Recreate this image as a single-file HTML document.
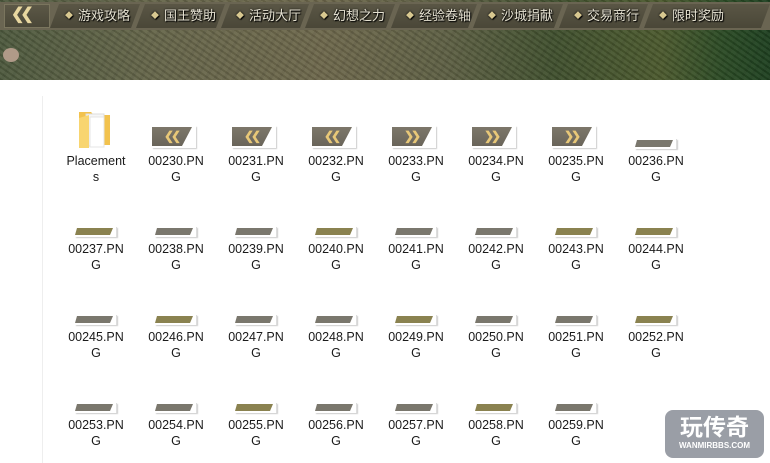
<!DOCTYPE html>
<html><head><meta charset="utf-8">
<style>
*{margin:0;padding:0;box-sizing:border-box}
body{width:770px;height:463px;overflow:hidden;background:#fff;position:relative;font-family:"Liberation Sans","Noto Sans CJK SC",sans-serif}
.banner{position:absolute;left:0;top:0;width:770px;height:80px;background:linear-gradient(90deg,#4e5a3e 0%,#66664a 20%,#6e684c 42%,#5e6044 58%,#40502e 72%,#4c5a2e 86%,#2a4a24 94%,#1e4020 100%)}
.banner:after{content:"";position:absolute;left:0;top:0;right:0;bottom:0;background:repeating-linear-gradient(35deg,rgba(0,0,0,.08) 0 2px,rgba(255,255,255,.05) 2px 5px),repeating-linear-gradient(-60deg,rgba(0,0,0,.06) 0 3px,transparent 3px 8px)}
.mush{position:absolute;left:3px;top:48px;width:16px;height:14px;border-radius:50%;background:#b09a88;z-index:1}
.bar{position:absolute;left:0;top:2px;width:770px;height:28px;background:#6a6552;z-index:2}
.tab{position:absolute;top:2px;height:24px;background:linear-gradient(#5a5645,#4a4738);clip-path:polygon(9px 0,100% 0,calc(100% - 9px) 100%,0 100%);color:#e6e2d2;font-size:13px;line-height:24px;text-shadow:0 0 2px #000,1px 1px 1px #000;white-space:nowrap;padding-left:15px}
.tab i{font-style:normal;font-size:8px;color:#d8c890;margin-right:5px;position:relative;top:-2px}
.back{position:absolute;left:4px;top:2px;width:46px;height:24px;background:linear-gradient(#5c5847,#4a4738);border:1px solid #7a755e;color:#e8d7a0;font-size:16px;font-weight:bold;line-height:20px;padding-left:6px;letter-spacing:-4px}
.vline{position:absolute;left:42px;top:96px;width:1px;height:367px;background:#eeeeee}
.lbl{position:absolute;width:76px;text-align:center;font-size:12.5px;line-height:16px;color:#1a1a1a}
.big{position:absolute;width:44px;height:22px;background:#fff;box-shadow:1px 1px 1px #ccc}
.big div{position:absolute;left:0;top:1px;width:40px;height:19px;background:linear-gradient(#7d776a,#6a655a);clip-path:polygon(0 0,100% 0,75% 100%,0 100%);color:#e8c878;font-size:12px;font-weight:bold;line-height:19px;padding-left:12px;letter-spacing:-3px}
.sm{position:absolute;width:42px;height:10px;background:#fff;box-shadow:1px 1px 1px #ccc;border-right:1px solid #ddd}
.sm div{position:absolute;left:0;top:1px;width:38px;height:7px;clip-path:polygon(2px 0,100% 0,calc(100% - 3px) 100%,0 100%)}
.g{background:#7a776d}.o{background:#8a8250}
.folder{position:absolute;left:78px;top:108px;width:34px;height:40px}
.wm{position:absolute;left:665px;top:410px;width:99px;height:48px;border-radius:8px;background:#9a9ea6;color:#fff;text-align:center}
.wm b{display:block;font-size:23px;line-height:28px;padding-top:3px}
.wm span{display:block;font-size:8px;line-height:10px;font-weight:bold}
</style></head><body>
<div class="banner"><div class="mush"></div></div>
<div class="bar">
<div class="back">❮❮</div>
<div class="tab" style="left:50px;width:90px"><i>◆</i>游戏攻略</div>
<div class="tab" style="left:136px;width:89px"><i>◆</i>国王赞助</div>
<div class="tab" style="left:221px;width:88px"><i>◆</i>活动大厅</div>
<div class="tab" style="left:305px;width:90px"><i>◆</i>幻想之力</div>
<div class="tab" style="left:391px;width:86px"><i>◆</i>经验卷轴</div>
<div class="tab" style="left:473px;width:90px"><i>◆</i>沙城捐献</div>
<div class="tab" style="left:559px;width:89px"><i>◆</i>交易商行</div>
<div class="tab" style="left:644px;width:126px"><i>◆</i>限时奖励</div>
</div>
<div class="vline"></div>

<svg class="folder" viewBox="0 0 34 40"><path d="M1 4h12l3 3h16v30H1z" fill="#f2c24e"/><path d="M8 6h18v32H8z" fill="#f6f6f6" stroke="#ddd"/><path d="M12 9h14v30H12z" fill="#fff" stroke="#e4e4e4"/><path d="M1 10l10-3v33H1z" fill="#f8d570"/></svg>
<div class="lbl" style="left:58px;top:153px">Placement<br>s</div>

<div class="big" style="left:152px;top:126px"><div>❮❮</div></div>
<div class="big" style="left:232px;top:126px"><div>❮❮</div></div>
<div class="big" style="left:312px;top:126px"><div>❮❮</div></div>
<div class="big" style="left:392px;top:126px"><div>❯❯</div></div>
<div class="big" style="left:472px;top:126px"><div>❯❯</div></div>
<div class="big" style="left:552px;top:126px"><div>❯❯</div></div>
<div class="sm" style="left:635px;top:139px"><div class="g"></div></div>
<div class="lbl" style="left:138px;top:153px">00230.PN<br>G</div>
<div class="lbl" style="left:218px;top:153px">00231.PN<br>G</div>
<div class="lbl" style="left:298px;top:153px">00232.PN<br>G</div>
<div class="lbl" style="left:378px;top:153px">00233.PN<br>G</div>
<div class="lbl" style="left:458px;top:153px">00234.PN<br>G</div>
<div class="lbl" style="left:538px;top:153px">00235.PN<br>G</div>
<div class="lbl" style="left:618px;top:153px">00236.PN<br>G</div>

<div class="sm" style="left:75px;top:227px"><div class="o"></div></div>
<div class="sm" style="left:155px;top:227px"><div class="g"></div></div>
<div class="sm" style="left:235px;top:227px"><div class="g"></div></div>
<div class="sm" style="left:315px;top:227px"><div class="o"></div></div>
<div class="sm" style="left:395px;top:227px"><div class="g"></div></div>
<div class="sm" style="left:475px;top:227px"><div class="g"></div></div>
<div class="sm" style="left:555px;top:227px"><div class="o"></div></div>
<div class="sm" style="left:635px;top:227px"><div class="o"></div></div>
<div class="lbl" style="left:58px;top:241px">00237.PN<br>G</div>
<div class="lbl" style="left:138px;top:241px">00238.PN<br>G</div>
<div class="lbl" style="left:218px;top:241px">00239.PN<br>G</div>
<div class="lbl" style="left:298px;top:241px">00240.PN<br>G</div>
<div class="lbl" style="left:378px;top:241px">00241.PN<br>G</div>
<div class="lbl" style="left:458px;top:241px">00242.PN<br>G</div>
<div class="lbl" style="left:538px;top:241px">00243.PN<br>G</div>
<div class="lbl" style="left:618px;top:241px">00244.PN<br>G</div>

<div class="sm" style="left:75px;top:315px"><div class="g"></div></div>
<div class="sm" style="left:155px;top:315px"><div class="o"></div></div>
<div class="sm" style="left:235px;top:315px"><div class="g"></div></div>
<div class="sm" style="left:315px;top:315px"><div class="g"></div></div>
<div class="sm" style="left:395px;top:315px"><div class="o"></div></div>
<div class="sm" style="left:475px;top:315px"><div class="g"></div></div>
<div class="sm" style="left:555px;top:315px"><div class="g"></div></div>
<div class="sm" style="left:635px;top:315px"><div class="o"></div></div>
<div class="lbl" style="left:58px;top:329px">00245.PN<br>G</div>
<div class="lbl" style="left:138px;top:329px">00246.PN<br>G</div>
<div class="lbl" style="left:218px;top:329px">00247.PN<br>G</div>
<div class="lbl" style="left:298px;top:329px">00248.PN<br>G</div>
<div class="lbl" style="left:378px;top:329px">00249.PN<br>G</div>
<div class="lbl" style="left:458px;top:329px">00250.PN<br>G</div>
<div class="lbl" style="left:538px;top:329px">00251.PN<br>G</div>
<div class="lbl" style="left:618px;top:329px">00252.PN<br>G</div>

<div class="sm" style="left:75px;top:403px"><div class="g"></div></div>
<div class="sm" style="left:155px;top:403px"><div class="g"></div></div>
<div class="sm" style="left:235px;top:403px"><div class="o"></div></div>
<div class="sm" style="left:315px;top:403px"><div class="g"></div></div>
<div class="sm" style="left:395px;top:403px"><div class="g"></div></div>
<div class="sm" style="left:475px;top:403px"><div class="o"></div></div>
<div class="sm" style="left:555px;top:403px"><div class="g"></div></div>
<div class="lbl" style="left:58px;top:417px">00253.PN<br>G</div>
<div class="lbl" style="left:138px;top:417px">00254.PN<br>G</div>
<div class="lbl" style="left:218px;top:417px">00255.PN<br>G</div>
<div class="lbl" style="left:298px;top:417px">00256.PN<br>G</div>
<div class="lbl" style="left:378px;top:417px">00257.PN<br>G</div>
<div class="lbl" style="left:458px;top:417px">00258.PN<br>G</div>
<div class="lbl" style="left:538px;top:417px">00259.PN<br>G</div>

<div class="wm"><b>玩传奇</b><span>WANMIRBBS.COM</span></div>
</body></html>
